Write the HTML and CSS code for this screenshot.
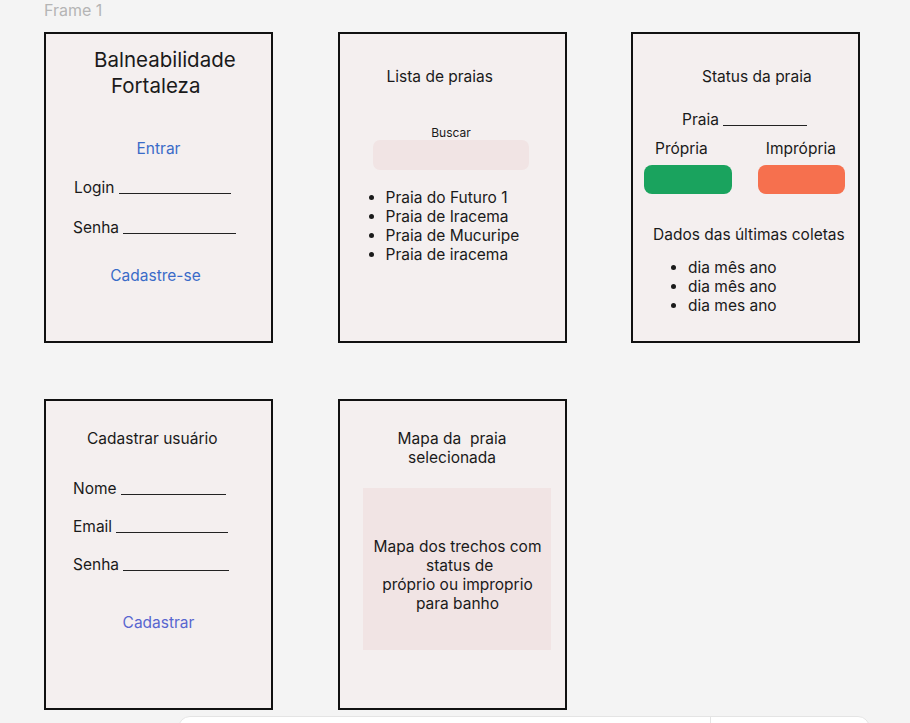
FILE: index.html
```html
<!DOCTYPE html>
<html lang="pt">
<head>
<meta charset="utf-8">
<title>Balneabilidade Fortaleza</title>
<link rel="stylesheet" href="styles.css">
</head>
<body>
<div class="canvas">
  <div class="frame-label">Frame 1</div>
  <div class="board">
    <section class="screen">
      <div class="app-title">
        <span class="t1">Balneabilidade</span>
        <span class="t2">Fortaleza</span>
      </div>
      <div class="link link-entrar">Entrar</div>
      <div class="field f-login">Login <span class="blank w112"></span></div>
      <div class="field f-senha1">Senha <span class="blank w113"></span></div>
      <div class="link link-cad">Cadastre-se</div>
    </section>

    <section class="screen">
      <div class="heading h-lista">Lista de praias</div>
      <div class="search-label">Buscar</div>
      <div class="search-box"></div>
      <ul class="list beaches">
        <li>Praia do Futuro 1</li>
        <li>Praia de Iracema</li>
        <li>Praia de Mucuripe</li>
        <li>Praia de iracema</li>
      </ul>
    </section>

    <section class="screen">
      <div class="heading h-status">Status da praia</div>
      <div class="field f-praia">Praia <span class="blank w84"></span></div>
      <div class="status-labels">
        <span class="lbl-p">Própria</span>
        <span class="lbl-i">Imprópria</span>
      </div>
      <div class="status-buttons">
        <div class="btn green"></div>
        <div class="btn orange"></div>
      </div>
      <div class="heading h-dados">Dados das últimas coletas</div>
      <ul class="list dates">
        <li>dia mês ano</li>
        <li>dia mês ano</li>
        <li>dia mes ano</li>
      </ul>
    </section>

    <section class="screen">
      <div class="heading h-cad">Cadastrar usuário</div>
      <div class="field f-nome">Nome <span class="blank w105"></span></div>
      <div class="field f-email">Email <span class="blank w112b"></span></div>
      <div class="field f-senha2">Senha <span class="blank w106"></span></div>
      <div class="link link-cadastrar">Cadastrar</div>
    </section>

    <section class="screen">
      <div class="heading h-mapa">Mapa da&nbsp; praia<br>selecionada</div>
      <div class="map-box">
        <p>Mapa dos trechos com<br>&nbsp;status de<br>próprio ou improprio<br>para banho</p>
      </div>
    </section>
  </div>
</div>
<div class="toolbar">
  <div class="tb-main"></div>
  <div class="tb-side"></div>
</div>
</body>
</html>
```

FILE: styles.css
```css
html, body {
  margin: 0;
  padding: 0;
}
body {
  background: #f4f4f4;
  font-family: Inter, "Noto Sans", sans-serif;
  color: #1a1a1a;
  font-size: 15.5px;
  height: 723px;
  overflow: hidden;
}
.canvas {
  padding-left: 44px;
}
.frame-label {
  font-size: 16px;
  color: #b5b5b5;
  line-height: 18px;
  padding-top: 1px;
  height: 31px;
}
.board {
  display: grid;
  grid-template-columns: 229px 229px 229px;
  column-gap: 64.5px;
  row-gap: 56px;
}
.screen {
  box-sizing: border-box;
  width: 229px;
  height: 311px;
  border: 2px solid #111;
  background: #f4efef;
  display: flex;
  flex-direction: column;
  align-items: flex-start;
}
.screen > * {
  line-height: 20px;
}
.app-title {
  margin-top: 13px;
  padding-left: 48px;
  font-size: 20.5px;
  display: flex;
  flex-direction: column;
}
.app-title span {
  line-height: 26px;
}
.app-title .t2 {
  padding-left: 17px;
}
.link {
  align-self: stretch;
  text-align: center;
}
.link-entrar {
  margin-top: 40px;
  color: #3a6bc8;
}
.link-cad {
  margin-top: 28px;
  color: #3a6bc8;
  padding-right: 6px;
}
.link-cadastrar {
  margin-top: 38px;
  color: #5866d0;
}
.field {
  white-space: nowrap;
}
.blank {
  display: inline-block;
  height: 0;
  border-bottom: 1.5px solid #222;
  vertical-align: -1px;
  margin-left: 0;
}
.w112 { width: 112px; }
.w113 { width: 113px; }
.w84 { width: 84px; }
.w105 { width: 105px; }
.w112b { width: 112px; }
.w106 { width: 106px; }
.f-login { margin-top: 19px; padding-left: 28px; }
.f-senha1 { margin-top: 20px; padding-left: 27px; }

.h-lista { margin-top: 33px; padding-left: 47px; }
.search-label {
  align-self: stretch;
  text-align: center;
  font-size: 12px;
  line-height: 14px;
  margin-top: 39px;
  padding-right: 2px;
}
.search-box {
  margin-left: 33px;
  width: 156px;
  height: 30px;
  border-radius: 7px;
  background: #f1e4e4;
}
.list {
  margin: 0;
  padding-left: 46px;
  list-style: disc;
}
.list li {
  line-height: 19px;
}
.beaches { margin-top: 18px; padding-left: 46px; }

.h-status { margin-top: 33px; padding-left: 69px; }
.f-praia { margin-top: 23px; padding-left: 49px; }
.status-labels {
  margin-top: 9px;
  padding-left: 22px;
  display: flex;
}
.lbl-i { margin-left: 58px; }
.status-buttons {
  margin-top: 6px;
  padding-left: 11px;
  display: flex;
  gap: 26px;
}
.btn {
  height: 29px;
  border-radius: 8px;
}
.green { width: 88px; background: #1aa35e; }
.orange { width: 87px; background: #f6704e; }
.h-dados { margin-top: 31px; padding-left: 20px; }
.dates { margin-top: 12.5px; padding-left: 55px; }

.h-cad { margin-top: 28px; padding-left: 41px; }
.f-nome { margin-top: 30px; padding-left: 27px; }
.f-email { margin-top: 18px; padding-left: 27px; }
.f-senha2 { margin-top: 18px; padding-left: 27px; }

.h-mapa {
  align-self: stretch;
  text-align: center;
  margin-top: 28px;
  line-height: 19px;
}
.map-box {
  margin-top: 21px;
  margin-left: 23px;
  width: 188px;
  height: 162px;
  background: #f1e4e4;
  display: flex;
  align-items: center;
  justify-content: center;
  padding-top: 11px;
  box-sizing: border-box;
}
.map-box p {
  margin: 0;
  text-align: center;
  line-height: 19px;
  padding-left: 2px;
}

.toolbar {
  position: fixed;
  left: 178px;
  top: 716px;
  width: 692px;
  height: 40px;
  background: #fff;
  border: 1px solid #e4e4e4;
  border-radius: 12px;
  display: flex;
  box-sizing: border-box;
}
.tb-main {
  width: 531px;
  border-right: 1px solid #e4e4e4;
}
.tb-side {
  flex: 1;
}
```
